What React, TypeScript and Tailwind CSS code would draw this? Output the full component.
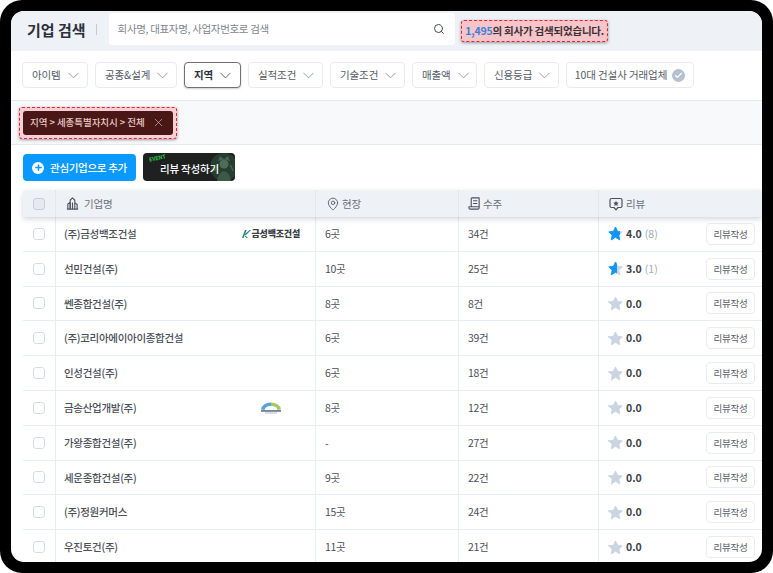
import { ChevronDown, X, Search, Plus, Check, MapPin } from "lucide-react";

const filters = [
  { label: "아이템", width: "w-[66px]" },
  { label: "공종&설계", width: "w-[82px]" },
  { label: "지역", width: "w-[57px]", active: true },
  { label: "실적조건", width: "w-[75px]" },
  { label: "기술조건", width: "w-[75px]" },
  { label: "매출액", width: "w-[65px]" },
  { label: "신용등급", width: "w-[75px]" },
];

const rows = [
  { name: "(주)금성백조건설", site: "6곳", orders: "34건", score: "4.0", count: "(8)", fill: 0.85, logo: "gs" },
  { name: "선민건설(주)", site: "10곳", orders: "25건", score: "3.0", count: "(1)", fill: 0.6 },
  { name: "쎈종합건설(주)", site: "8곳", orders: "8건", score: "0.0", fill: 0 },
  { name: "(주)코리아에이아이종합건설", site: "6곳", orders: "39건", score: "0.0", fill: 0 },
  { name: "인성건설(주)", site: "6곳", orders: "18건", score: "0.0", fill: 0 },
  { name: "금송산업개발(주)", site: "8곳", orders: "12건", score: "0.0", fill: 0, logo: "arc" },
  { name: "가왕종합건설(주)", site: "-", orders: "27건", score: "0.0", fill: 0 },
  { name: "세운종합건설(주)", site: "9곳", orders: "22건", score: "0.0", fill: 0 },
  { name: "(주)정원커머스", site: "15곳", orders: "24건", score: "0.0", fill: 0 },
  { name: "우진토건(주)", site: "11곳", orders: "21건", score: "0.0", fill: 0 },
];

const grid = "grid grid-cols-[33px_260px_143px_140px_1fr]";

function Box({ head }: { head?: boolean }) {
  return (
    <span
      className={`block h-[12px] w-[12px] rounded-[3px] border-[1.5px] ${
        head ? "border-[#c9cfd9] bg-[#e6e9ef]" : "border-[#d5dbe5] bg-white"
      }`}
    />
  );
}

function Star({ fill, id }: { fill: number; id: string }) {
  const d = "M8 1l2.2 4.6 5 .7-3.6 3.5.9 5L8 12l-4.5 2.8.9-5L.8 6.3l5-.7z";
  return (
    <svg width="15" height="15" viewBox="0 0 16 16" className="shrink-0">
      <defs>
        <linearGradient id={id}>
          <stop offset={fill} stopColor="#1395f5" />
          <stop offset={fill} stopColor="#cbd4e1" />
        </linearGradient>
      </defs>
      <path d={d} fill={`url(#${id})`} stroke={`url(#${id})`} strokeLinejoin="round" />
    </svg>
  );
}

function BuildingIcon() {
  return (
    <svg width="13" height="13" viewBox="0 0 14 14" fill="none" stroke="#4b515c" strokeWidth="1.2" strokeLinejoin="round" className="shrink-0">
      <path d="M1 13h12" />
      <path d="M2 13V7.5L4.5 6V13" />
      <path d="M4.5 13V3.5L7 1l2.5 2.5V13" />
      <path d="M9.5 6.5L12 8v5" />
      <path d="M7 6v7" />
    </svg>
  );
}

function ReceiptIcon() {
  return (
    <svg width="13" height="13" viewBox="0 0 14 14" fill="none" stroke="#4b515c" strokeWidth="1.2" strokeLinejoin="round" className="shrink-0">
      <path d="M3.5 1h8.5v9.5" />
      <path d="M3.5 1v9.5H1v1a1.5 1.5 0 0 0 1.5 1.5h8A1.5 1.5 0 0 0 12 11.5v-1H3.5" />
      <path d="M5.5 4H10M5.5 7H10" />
    </svg>
  );
}

function ReviewIcon() {
  return (
    <svg width="14" height="14" viewBox="0 0 14 14" fill="none" className="shrink-0">
      <path d="M2.5 1.5h9A1.5 1.5 0 0 1 13 3v6a1.5 1.5 0 0 1-1.5 1.5H9L7 12.8 5 10.5H2.5A1.5 1.5 0 0 1 1 9V3a1.5 1.5 0 0 1 1.5-1.5z" stroke="#4b515c" strokeWidth="1.2" strokeLinejoin="round" />
      <path d="M7 3.8l.9 1.7 1.8.3-1.3 1.3.3 1.8L7 8.1l-1.7.8.3-1.800-1.300-1.300 1.800-.3z" fill="#4b515c" />
    </svg>
  );
}

function GsLogo() {
  return (
    <div className="flex items-center gap-[1px]">
      <svg width="10" height="10" viewBox="0 0 10 10">
        <path d="M1 9L4 1h1.6L2.6 9z" fill="#1f8a4c" />
        <path d="M3.6 5.6L8.6 1H10L5 6z" fill="#1c6fc4" />
        <path d="M4.4 6.4L7 9H5.6L3.8 7z" fill="#1f8a4c" />
      </svg>
      <span className="text-[9px] font-black leading-none tracking-[-0.2px] text-[#3a3d42]">금성백조건설</span>
    </div>
  );
}

function ArcLogo() {
  return (
    <svg width="22" height="13" viewBox="0 0 22 13">
      <path d="M1 8.5a10 7.5 0 0 1 10-7V5a6.500 4.500 0 0 0-6.500 4z" fill="#5aa2d8" />
      <path d="M11 1.500a10 7.500 0 0 1 10 7l-3.500.5A6.500 4.500 0 0 0 11 5z" fill="#a6c968" />
      <rect x="1" y="9.200" width="20" height="1.500" fill="#56688c" />
      <rect x="5" y="11.500" width="12" height="1" fill="#b5bdca" />
    </svg>
  );
}

function EventArt() {
  return (
    <svg width="24" height="28" viewBox="0 0 24 28" className="absolute right-0 top-0">
      <circle cx="13" cy="14" r="14" fill="#263d30" />
      <path d="M6 28c1-6 3-9 7-10 4 1 6 4 7 10z" fill="#3c5848" />
      <circle cx="13" cy="11" r="4.5" fill="#4f6c5a" />
      <path d="M7 8l2-5 4 3 4-3 2 5-6-1.500z" fill="#466353" />
      <path d="M4 18c1-3 2-5 3-6M22 18c-1-3-2-5-3-6" stroke="#466353" strokeWidth="1.5" fill="none" />
    </svg>
  );
}

export default function App() {
  return (
    <div className="h-[573px] w-[773px] overflow-hidden bg-white font-['Noto_Sans_CJK_KR','Noto_Sans',sans-serif]">
      <div className="h-full rounded-[22px] bg-black p-[11px]">
        <div className="h-[551px] w-[751px] overflow-hidden rounded-[13px] bg-white">
          <header className="flex h-[40px] items-center bg-[#eef1f6] pb-[4px] pl-[16px]">
            <h1 className="text-[15px] font-bold leading-none text-[#2b303a]">기업 검색</h1>
            <span className="ml-[10px] h-[11px] w-px bg-[#c4cad4]" />
            <div className="ml-[12px] flex h-[32px] w-[346px] items-center justify-between rounded-[3px] bg-white pl-[9px] pr-[10px]">
              <span className="text-[10.5px] tracking-[-0.33px] text-[#7e8590]">회사명, 대표자명, 사업자번호로 검색</span>
              <Search size={12} strokeWidth={2} className="text-[#444a54]" />
            </div>
            <div className="ml-[6px] mt-[4px] flex h-[22px] w-[147px] items-center justify-center rounded-[3px] border border-dashed border-[#f01f2e] bg-[#f5c5c9] pl-[1px] text-[10.5px] font-semibold tracking-[-0.2px] text-[#3f3036] shadow-[0_1px_3px_rgba(60,60,80,0.5)]">
              <span className="text-[#3f7fdc]">1,495</span>의 회사가 검색되었습니다.
            </div>
          </header>

          <div className="flex h-[50px] items-center gap-[7px] border-b border-[#e3e9f1] pb-[1px] pl-[11px]">
            {filters.map((f) => (
              <button
                key={f.label}
                className={`flex h-[26px] ${f.width} items-center justify-start gap-[3px] rounded-[4px] border bg-white pl-[9px] text-[10.5px] tracking-[-0.1px] ${
                  f.active
                    ? "border-[#6e7278] font-bold text-[#2b303a] shadow-[0_1px_2px_rgba(0,0,0,0.2)]"
                    : "border-[#e8ecf2] text-[#555b66]"
                }`}
              >
                {f.label}
                <ChevronDown size={19} strokeWidth={1} className={f.active ? "text-[#3a3f47]" : "text-[#7e8590]"} />
              </button>
            ))}
            <button className="flex h-[26px] w-[128px] items-center justify-center gap-[5px] rounded-[4px] border border-[#e8ecf2] bg-white text-[10.5px] tracking-[-0.1px] text-[#555b66]">
              10대 건설사 거래업체
              <span className="flex h-[13px] w-[13px] items-center justify-center rounded-full bg-[#b7c0ce]">
                <Check size={9} strokeWidth={3} className="text-white" />
              </span>
            </button>
          </div>

          <div className="flex h-[44px] items-center border-b border-[#e3e9f1] bg-[#f8f9fb] pl-[8px]">
            <div className="rounded-[3px] border border-dashed border-[#f01f2e] bg-[#f9cfd3] p-[3px] shadow-[0_1px_3px_rgba(60,60,80,0.5)]">
              <div className="flex h-[24px] w-[150px] items-center justify-between rounded-[3px] bg-[#4a1717] pl-[7px] pr-[8px]">
                <span className="text-[9.5px] font-medium tracking-[-0.05px] text-[#e9c9c3]">지역 &gt; 세종특별자치시 &gt; 전체</span>
                <X size={13} strokeWidth={1.3} className="text-[#d8b0ac]" />
              </div>
            </div>
          </div>

          <div className="flex gap-[7px] pl-[12px] pt-[9px]">
            <button className="flex h-[27px] w-[113px] items-center justify-center gap-[6px] rounded-[4px] bg-[#0a99ff] text-[10.5px] font-medium tracking-[-0.3px] text-white">
              <span className="flex h-[12px] w-[12px] items-center justify-center rounded-full bg-white">
                <Plus size={9} strokeWidth={4} className="text-[#0a99ff]" />
              </span>
              관심기업으로 추가
            </button>
            <button className="relative -mt-px flex h-[28px] w-[92px] items-center overflow-hidden rounded-[4px] bg-[#1e2120] pl-[17px] pt-[3px] text-[10.5px] font-medium tracking-[-0.2px] text-white">
              <EventArt />
              <span className="relative">리뷰 작성하기</span>
              <span className="absolute left-[6px] top-[3px] -rotate-12 text-[5.5px] font-bold leading-none text-[#2fc24a]">EVENT</span>
            </button>
          </div>

          <div className="ml-[12px] mt-[9px]">
            <div className={`${grid} relative h-[27px] rounded-t-[4px] bg-[#eef1f6] text-[10.5px] tracking-[-0.2px] text-[#6a707b] shadow-[0_2px_5px_rgba(80,90,110,0.25)]`}>
              <div className="flex items-center justify-center border-r border-[#e3e7ee]"><Box head /></div>
              <div className="flex items-center gap-[5px] border-r border-[#e3e7ee] pl-[10px]">
                <BuildingIcon />
                기업명
              </div>
              <div className="flex items-center gap-[2px] border-r border-[#e3e7ee] pl-[10px]">
                <MapPin size={14} strokeWidth={1.4} className="text-[#4b515c]" />
                현장
              </div>
              <div className="flex items-center gap-[2px] border-r border-[#e3e7ee] pl-[9px]">
                <ReceiptIcon />
                수주
              </div>
              <div className="flex items-center gap-[3px] pl-[10px]">
                <ReviewIcon />
                리뷰
              </div>
            </div>

            {rows.map((r, i) => (
              <div key={r.name} className={`${grid} h-[34.8px] border-b border-[#e8edf4] text-[10.5px] tracking-[-0.3px] text-[#4a4f59]`}>
                <div className="flex items-center justify-center border-r border-[#e8edf4]"><Box /></div>
                <div className="flex items-center justify-between border-r border-[#e8edf4] pl-[8px] pr-[15px] font-medium">
                  {r.name}
                  {r.logo === "gs" && <GsLogo />}
                  {r.logo === "arc" && <span className="mr-[18px]"><ArcLogo /></span>}
                </div>
                <div className="flex items-center border-r border-[#e8edf4] pl-[9px]">{r.site}</div>
                <div className="flex items-center border-r border-[#e8edf4] pl-[9px]">{r.orders}</div>
                <div className="flex items-center pl-[9px] pr-[7px]">
                  <Star fill={r.fill} id={`star-${i}`} />
                  <span className="ml-[3px] font-bold tracking-normal text-[#3a3f49]">{r.score}</span>
                  {r.count && <span className="ml-[3px] tracking-normal text-[#a3aab6]">{r.count}</span>}
                  <button className="ml-auto flex h-[22px] w-[49px] items-center justify-center rounded-[4px] border border-[#e8ecf2] bg-white text-[9.5px] tracking-[-0.3px] text-[#555b66]">
                    리뷰작성
                  </button>
                </div>
              </div>
            ))}
          </div>
        </div>
      </div>
    </div>
  );
}
